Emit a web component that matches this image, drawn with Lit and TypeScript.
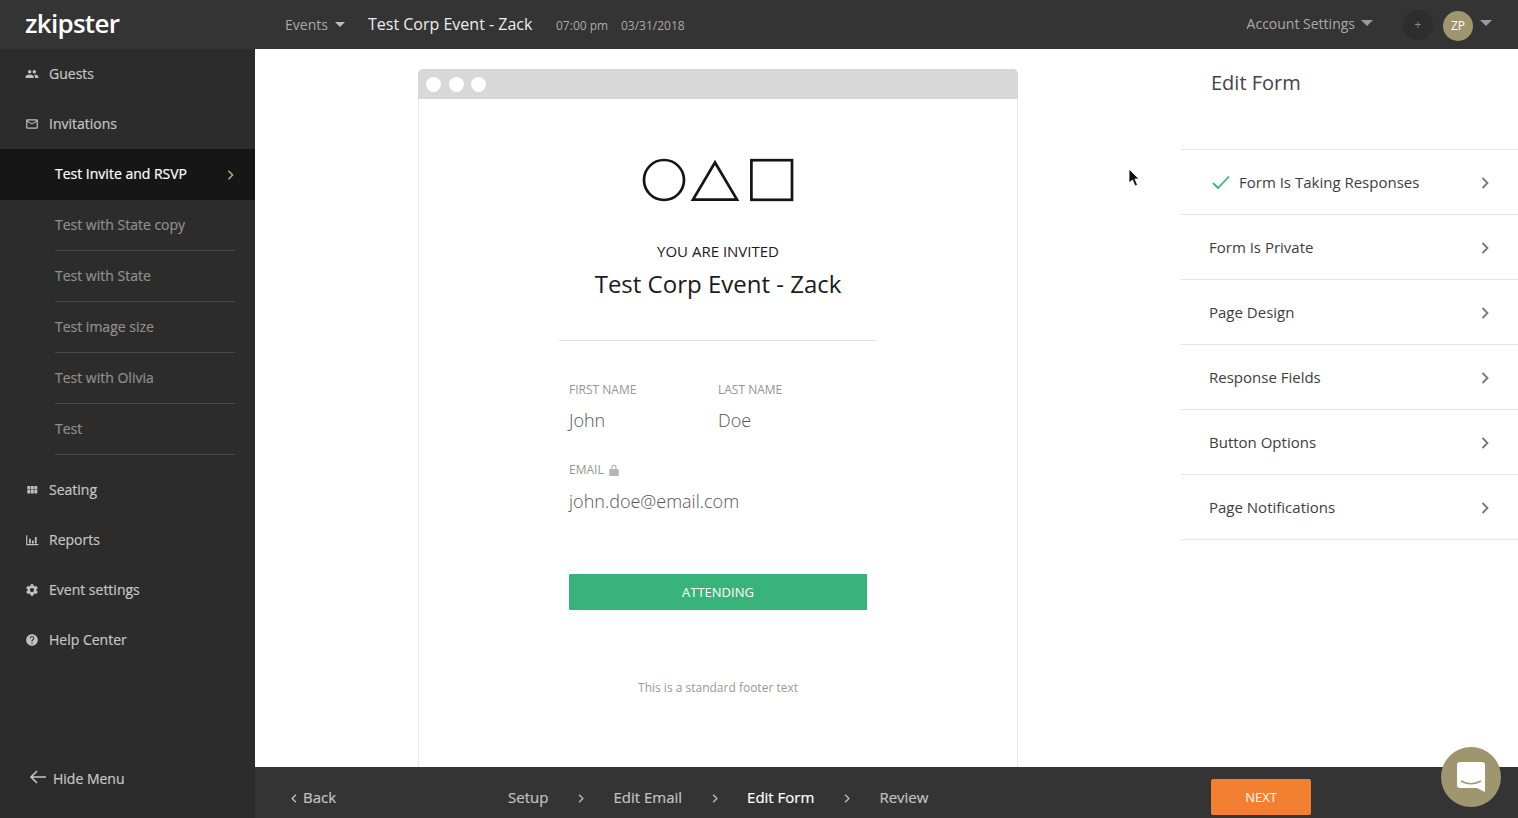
import { LitElement, html, css, svg } from "lit";
import { customElement } from "lit/decorators.js";

const icons: Record<string, unknown> = {
  people: svg`<path d="M16 11c1.66 0 2.99-1.34 2.99-3S17.66 5 16 5c-1.66 0-3 1.34-3 3s1.34 3 3 3zm-8 0c1.66 0 2.99-1.34 2.99-3S9.66 5 8 5C6.34 5 5 6.34 5 8s1.34 3 3 3zm0 2c-2.33 0-7 1.17-7 3.5V19h14v-2.5c0-2.33-4.67-3.5-7-3.5zm8 0c-.29 0-.62.02-.97.05 1.16.84 1.97 1.97 1.97 3.45V19h6v-2.5c0-2.33-4.67-3.5-7-3.5z"/>`,
  mail: svg`<path d="M20 4H4c-1.1 0-1.99.9-1.99 2L2 18c0 1.1.9 2 2 2h16c1.1 0 2-.9 2-2V6c0-1.1-.9-2-2-2zm0 14H4V8l8 5 8-5v10zm-8-7L4 6h16l-8 5z"/>`,
  grid: svg`<path d="M4 11h5V5H4v6zm0 7h5v-6H4v6zm6 0h5v-6h-5v6zm6 0h5v-6h-5v6zm-6-7h5V5h-5v6zm6-6v6h5V5h-5z"/>`,
  bars: svg`<path d="M2 4h2v15h19v2H2zM7 10h3v8H7zM12 13h3v5h-3zM17 7h3v11h-3z"/>`,
  gear: svg`<path d="M19.43 12.98c.04-.32.07-.64.07-.98s-.03-.66-.07-.98l2.11-1.65c.19-.15.24-.42.12-.64l-2-3.46c-.12-.22-.39-.3-.61-.22l-2.49 1c-.52-.4-1.08-.73-1.69-.98l-.38-2.65C14.46 2.18 14.25 2 14 2h-4c-.25 0-.46.18-.49.42l-.38 2.65c-.61.25-1.17.59-1.69.98l-2.49-1c-.23-.09-.49 0-.61.22l-2 3.46c-.13.22-.07.49.12.64l2.11 1.65c-.04.32-.07.65-.07.98s.03.66.07.98l-2.11 1.65c-.19.15-.24.42-.12.64l2 3.46c.12.22.39.3.61.22l2.49-1c.52.4 1.08.73 1.69.98l.38 2.65c.03.24.24.42.49.42h4c.25 0 .46-.18.49-.42l.38-2.65c.61-.25 1.17-.59 1.69-.98l2.49 1c.23.09.49 0 .61-.22l2-3.46c.12-.22.07-.49-.12-.64l-2.11-1.65zM12 15.5c-1.93 0-3.5-1.57-3.5-3.5s1.57-3.5 3.5-3.5 3.5 1.57 3.5 3.5-1.57 3.5-3.5 3.5z"/>`,
  help: svg`<path d="M12 2C6.48 2 2 6.48 2 12s4.48 10 10 10 10-4.48 10-10S17.52 2 12 2zm1 17h-2v-2h2v2zm2.07-7.75l-.9.92C13.45 12.9 13 13.5 13 15h-2v-.5c0-1.1.45-2.1 1.17-2.83l1.24-1.26c.37-.36.59-.86.59-1.41 0-1.1-.9-2-2-2s-2 .9-2 2H8c0-2.21 1.79-4 4-4s4 1.79 4 4c0 .88-.36 1.68-.93 2.25z"/>`,
};

const icon = (n: string) => html`<svg class="nav-icon" viewBox="0 0 24 24" fill="currentColor">${icons[n]}</svg>`;
const chev = (c: string) => html`<svg class=${c} viewBox="0 0 8 12" fill="none" stroke="currentColor" stroke-width="1.8"><path d="M1.500 1l5 5-5 5"/></svg>`;

@customElement("app-root")
export class AppRoot extends LitElement {
  static styles = css`
    :host { display: block; height: 818px; overflow: hidden; position: relative; background: #fff;
      font-family: "Open Sans", "Liberation Sans", sans-serif; font-size: 14px; }
    * { box-sizing: border-box; }

    .top { height: 49px; background: #343434; display: flex; align-items: center; color: #a9a9a9; }
    .logo-cell { width: 285px; padding-left: 25px; }
    .logo { color: #fff; font-size: 26px; font-weight: 600; letter-spacing: -0.72px; line-height: 47px; display: block; height: 49px; }
    .events { display: flex; align-items: center; gap: 7px; width: 83px; }
    .caret { width: 0; height: 0; border-left: 5px solid transparent; border-right: 5px solid transparent; border-top: 5px solid #bdbdbd; }
    .caret.wide { border-left-width: 6px; border-right-width: 6px; border-top-width: 6px; margin-top: -3px; border-top-color: #9a9a9a; }
    .event-title { font-size: 16px; color: #eee; width: 188px; padding-bottom: 2px; }
    .when { font-size: 12px; width: 65px; padding-top: 2px; white-space: nowrap; }
    .top-right { margin-left: auto; display: flex; align-items: center; padding-right: 26px; }
    .account { margin-right: 6px; padding-bottom: 2px; }
    .plus { width: 30px; height: 30px; border-radius: 50%; background: #2d2d2d; margin-left: 30px; display: flex; align-items: center; justify-content: center; font-size: 12px; color: #8a8a8a; }
    .avatar { width: 30px; height: 30px; border-radius: 50%; background: #9f9670; margin: 2px 7px 0 10px; display: flex; align-items: center; justify-content: center; font-size: 12px; color: #fff; }

    .body { display: flex; height: 769px; }
    .side { width: 255px; flex: none; background: #2c2c2c; color: #c6c6c6; display: flex; flex-direction: column; -webkit-text-stroke: 0.2px; }
    .nav { height: 50px; display: flex; align-items: center; padding: 0 0 2px 25px; gap: 10px; }
    .nav-icon { width: 14px; height: 14px; flex: none; color: #c0c0c0; margin-top: 2px; }
    .active { height: 51px; background: #161616; color: #fff; display: flex; align-items: center; justify-content: space-between; padding: 0 21px 2px 55px; }
    .active-chev { width: 7px; height: 10px; color: #c9a77f; margin-top: 2px; }
    .subs { margin-bottom: 10px; color: #8f8f8f; }
    .sub { height: 51px; margin: 0 20px 0 55px; padding-bottom: 2px; display: flex; align-items: center; border-bottom: 1px solid #4a4a4a; }
    .hide { margin-top: auto; height: 58px; margin-bottom: 11px; display: flex; align-items: center; gap: 7px; padding-left: 29px; color: #c6c6c6; }
    .hide svg { width: 17px; height: 14px; margin-top: -2px; }

    .right { flex: 1; display: flex; flex-direction: column; min-width: 0; }
    .main { flex: none; height: 718px; display: flex; }
    .stage { flex: 1; display: flex; justify-content: center; padding-top: 20px; }
    .win { width: 600px; height: 698px; display: flex; flex-direction: column; }
    .bar { height: 30px; flex: none; background: #d8d8d8; border-radius: 5px 5px 0 0; display: flex; align-items: center; padding-left: 8.250px; gap: 7.500px; }
    .dot { width: 15px; height: 15px; border-radius: 50%; background: #fff; }
    .page { flex: 1; border: 1px solid #e9e9e9; border-width: 0 1px; display: flex; flex-direction: column; align-items: center; padding-top: 59px; color: #111; }
    .shapes { width: 152px; height: 44px; display: block; }
    .invited { margin-top: 39px; font-size: 15px; line-height: 20px; color: #1a1a1a; }
    h1 { margin: 6px 0 0; font-size: 24px; font-weight: 400; line-height: 34px; color: #1a1a1a; }
    .rule { width: 318px; height: 1px; background: #e4e4e4; margin-top: 39px; }
    .fields { width: 298px; margin-top: 40px; }
    .names { display: flex; }
    .names > div { width: 149px; }
    .lab { font-size: 12px; line-height: 18px; color: #959595; display: flex; align-items: center; gap: 5px; }
    .lab svg { width: 10px; height: 12px; margin-top: -1px; }
    .val { font-size: 18px; font-weight: 300; line-height: 26px; color: #555; margin-top: 8px; }
    .email { margin-top: 28px; }
    .email .val { margin-top: 9px; }
    .attend { width: 298px; height: 36px; margin-top: 60px; background: #38b47a; color: #fff; font-size: 13px; display: flex; align-items: center; justify-content: center; border-radius: 1px; padding-bottom: 1px; }
    .foot { margin-top: 69px; font-size: 12px; line-height: 18px; color: #999; }

    .panel { width: 337px; flex: none; }
    .panel h2 { margin: 0; height: 100px; padding: 18px 0 0 30px; font-size: 20px; font-weight: 400; line-height: 32px; color: #444; }
    .row { height: 65px; border-top: 1px solid #e6e6e6; display: flex; align-items: center; padding: 0 29px 0 28px; font-size: 15px; color: #3d3d3d; }
    .row:last-child { height: 66px; border-bottom: 1px solid #e6e6e6; }
    .row span { flex: 1; }
    .row.first { padding-left: 31px; }
    .check { width: 18px; height: 15px; margin-right: 9px; }
    .row-chev { width: 8px; height: 12px; color: #777; margin-top: 2px; }

    .bottom { flex: none; height: 51px; background: #343434; color: #c2c2c2; display: flex; padding: 12px 207px 0 36px; align-items: flex-start; font-size: 15px; -webkit-text-stroke: 0.2px; }
    .back { display: flex; align-items: center; gap: 6px; width: 217px; height: 36px; }
    .step-group { display: flex; align-items: center; height: 36px; }
    .step-chev { width: 6px; height: 9px; margin: 2px 29.500px 0 29.500px; color: #bbb; }
    .back svg { width: 6px; height: 9px; transform: scaleX(-1); margin-top: 2px; }
    .cur { color: #fff; }
    .next { margin-left: auto; width: 100px; height: 36px; background: #f38030; color: #fff; font-size: 13px; -webkit-text-stroke: 0; border-radius: 2px; display: flex; align-items: center; justify-content: center; }

    .chat { position: absolute; left: 1441px; top: 747px; width: 60px; height: 60px; border-radius: 50%; background: #9f9670; display: flex; align-items: center; justify-content: center; }
    .chat svg { width: 30px; height: 32px; }
    .cursor { position: absolute; left: 1128px; top: 168px; width: 12px; height: 20px; }
  `;

  render() {
    return html`
      <div class="top">
        <div class="logo-cell"><span class="logo">zkipster</span></div>
        <div class="events">Events <i class="caret"></i></div>
        <div class="event-title">Test Corp Event - Zack</div>
        <div class="when">07:00 pm</div>
        <div class="when">03/31/2018</div>
        <div class="top-right">
          <span class="account">Account Settings</span><i class="caret wide"></i>
          <div class="plus">+</div>
          <div class="avatar">ZP</div>
          <i class="caret wide"></i>
        </div>
      </div>
      <div class="body">
        <aside class="side">
          <div class="nav">${icon("people")}Guests</div>
          <div class="nav">${icon("mail")}Invitations</div>
          <div class="active">Test Invite and RSVP ${chev("active-chev")}</div>
          <div class="subs">
            ${["Test with State copy", "Test with State", "Test image size", "Test with Olivia", "Test"].map(
              (s) => html`<div class="sub">${s}</div>`
            )}
          </div>
          <div class="nav">${icon("grid")}Seating</div>
          <div class="nav">${icon("bars")}Reports</div>
          <div class="nav">${icon("gear")}Event settings</div>
          <div class="nav">${icon("help")}Help Center</div>
          <div class="hide">
            <svg viewBox="0 0 17 14" fill="none" stroke="currentColor" stroke-width="1.6"><path d="M17 7H2M8 1L2 7l6 6"/></svg>
            Hide Menu
          </div>
        </aside>
        <div class="right">
          <div class="main">
            <div class="stage">
              <div class="win">
                <div class="bar"><i class="dot"></i><i class="dot"></i><i class="dot"></i></div>
                <div class="page">
                  <svg class="shapes" viewBox="0 0 152 44" fill="none" stroke="#151515" stroke-width="2.700">
                    <circle cx="22" cy="22" r="20"/>
                    <path d="M73 4.500L51 41.600h44z"/>
                    <rect x="109.400" y="2.200" width="40.600" height="39.600"/>
                  </svg>
                  <div class="invited">YOU ARE INVITED</div>
                  <h1>Test Corp Event - Zack</h1>
                  <div class="rule"></div>
                  <div class="fields">
                    <div class="names">
                      <div><div class="lab">FIRST NAME</div><div class="val">John</div></div>
                      <div><div class="lab">LAST NAME</div><div class="val">Doe</div></div>
                    </div>
                    <div class="email">
                      <div class="lab">EMAIL
                        <svg viewBox="0 0 10 12" fill="#b5b5b5"><path d="M1 5h8a.8.8 0 0 1 .8.8v5.400a.8.8 0 0 1-.8.8H1a.8.8 0 0 1-.8-.8V5.800A.8.800 0 0 1 1 5zM2.500 5V3.300a2.500 2.500 0 0 1 5 0V5H6.300V3.300a1.300 1.300 0 0 0-2.600 0V5z"/></svg>
                      </div>
                      <div class="val">john.doe@email.com</div>
                    </div>
                  </div>
                  <div class="attend">ATTENDING</div>
                  <div class="foot">This is a standard footer text</div>
                </div>
              </div>
            </div>
            <div class="panel">
              <h2>Edit Form</h2>
              <div class="row first">
                <svg class="check" viewBox="0 0 18 15" fill="none" stroke="#38b47a" stroke-width="1.800"><path d="M1 8l5 5L17 1.500"/></svg>
                <span>Form Is Taking Responses</span>${chev("row-chev")}
              </div>
              ${["Form Is Private", "Page Design", "Response Fields", "Button Options", "Page Notifications"].map(
                (r) => html`<div class="row"><span>${r}</span>${chev("row-chev")}</div>`
              )}
            </div>
          </div>
          <div class="bottom">
            <div class="back">${chev("")}Back</div>
            <div class="step-group">
              <span>Setup</span>${chev("step-chev")}
              <span>Edit Email</span>${chev("step-chev")}
              <span class="cur">Edit Form</span>${chev("step-chev")}
              <span>Review</span>
            </div>
            <div class="next">NEXT</div>
          </div>
        </div>
      </div>
      <div class="chat">
        <svg viewBox="0 0 30 32"><path fill="#fff" d="M4 1h22a3 3 0 0 1 3 3v27l-8-4H4a3 3 0 0 1-3-3V4a3 3 0 0 1 3-3z"/><path d="M5 20c6 3.500 14 3.500 20 0" fill="none" stroke="#9f9670" stroke-width="1.500"/></svg>
      </div>
      <svg class="cursor" viewBox="0 0 12 20"><path d="M1 1v14l3.500-3 2.500 6 2.500-1-2.500-6H11z" fill="#111" stroke="#fff" stroke-width=".8"/></svg>
    `;
  }
}
